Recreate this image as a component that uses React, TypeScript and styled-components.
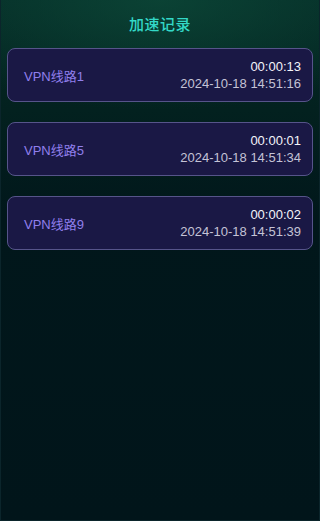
import React from 'react';
import styled, { createGlobalStyle } from 'styled-components';

const GlobalStyle = createGlobalStyle`
  html, body {
    margin: 0;
    padding: 0;
    background: #01151a;
  }
  body {
    font-family: "Liberation Sans", "Noto Sans CJK SC", sans-serif;
  }
`;

interface IRecord {
  id: number;
  line: string;
  duration: string;
  time: string;
}

const records: IRecord[] = [
  { id: 1, line: 'VPN线路1', duration: '00:00:13', time: '2024-10-18 14:51:16' },
  { id: 2, line: 'VPN线路5', duration: '00:00:01', time: '2024-10-18 14:51:34' },
  { id: 3, line: 'VPN线路9', duration: '00:00:02', time: '2024-10-18 14:51:39' },
];

const Page = styled.div`
  box-sizing: border-box;
  width: 320px;
  height: 521px;
  overflow: hidden;
  border: 1px solid #0b252b;
  border-top: none;
  background:
    radial-gradient(ellipse 280px 110px at 50% 0%, rgba(12, 72, 56, 0.8), rgba(12, 72, 56, 0) 100%),
    linear-gradient(180deg, #052b26 0px, #03211f 110px, #01171b 220px, #01151a 100%);
`;

const Header = styled.div`
  height: 48px;
  display: flex;
  align-items: center;
  justify-content: center;
  color: #33d8c7;
  font-size: 15px;
  font-weight: 500;
  letter-spacing: 0.5px;
  padding-bottom: 1px;
  box-sizing: border-box;
`;

const List = styled.div`
  display: flex;
  flex-direction: column;
  gap: 20px;
  padding: 0 6px;
`;

const Card = styled.div`
  box-sizing: border-box;
  height: 54px;
  display: flex;
  align-items: center;
  justify-content: space-between;
  padding: 0 11px 0 16px;
  background: #1a1845;
  border: 1px solid #56548a;
  border-radius: 8px;
`;

const LineName = styled.div`
  color: #907fec;
  font-size: 13px;
`;

const Info = styled.div`
  display: flex;
  flex-direction: column;
  align-items: flex-end;
  gap: 2px;
  font-size: 13px;
  line-height: 15px;
`;

const Duration = styled.div`
  color: #f4f4fa;
`;

const Stamp = styled.div`
  color: #c4c3d6;
`;

const App: React.FC = () => {
  return (
    <>
      <GlobalStyle />
      <Page>
        <Header>加速记录</Header>
        <List>
          {records.map((r) => (
            <Card key={r.id}>
              <LineName>{r.line}</LineName>
              <Info>
                <Duration>{r.duration}</Duration>
                <Stamp>{r.time}</Stamp>
              </Info>
            </Card>
          ))}
        </List>
      </Page>
    </>
  );
};

export default App;
